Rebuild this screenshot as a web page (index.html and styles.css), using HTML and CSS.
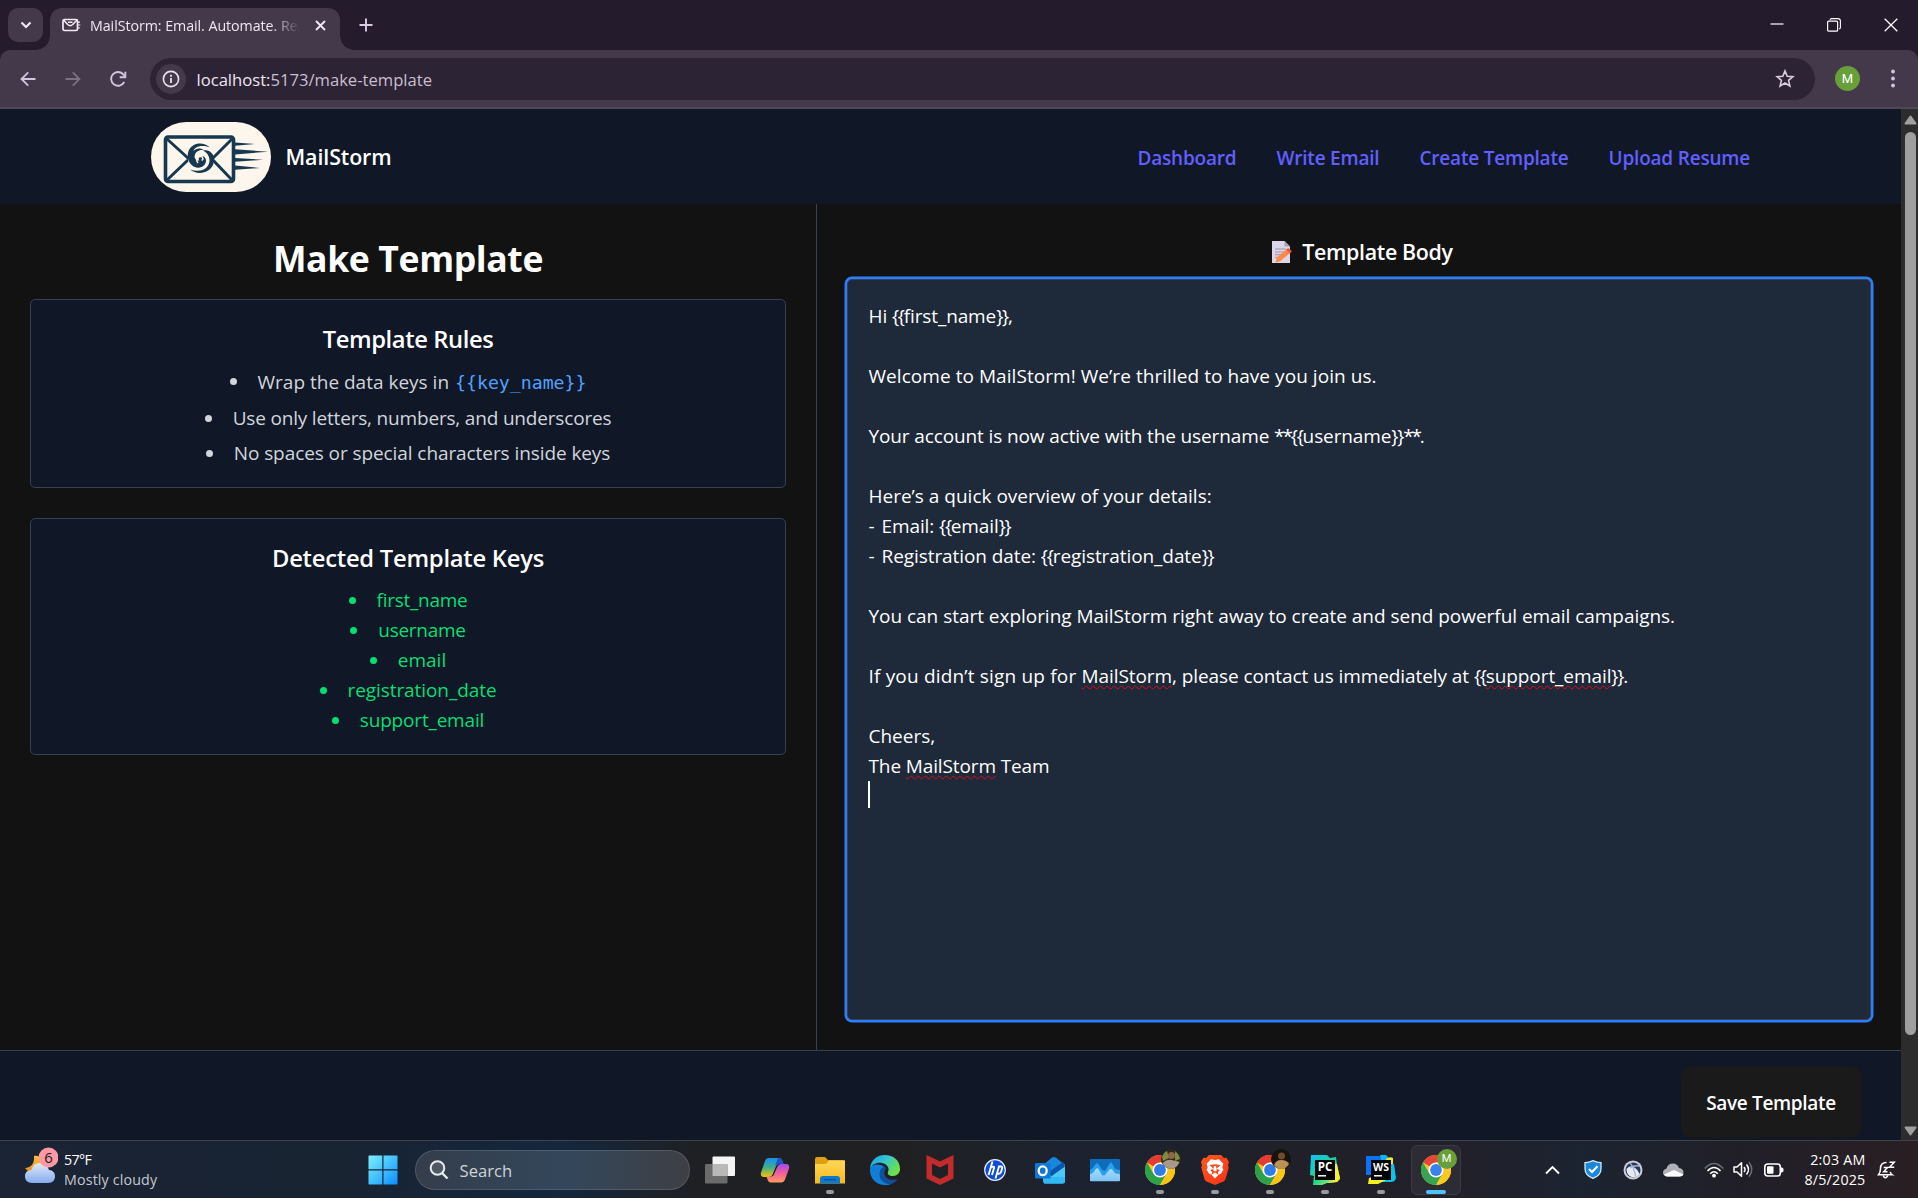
FILE: index.html
```
<!DOCTYPE html>
<html lang="en">
<head>
<meta charset="utf-8">
<title>MailStorm: Email. Automate. Repeat.</title>
<link rel="stylesheet" href="styles.css">
</head>
<body>
<svg class="defs" width="0" height="0" aria-hidden="true">
  <defs>
    <linearGradient id="gWin" x1="0" y1="0" x2="1" y2="1"><stop offset="0" stop-color="#7df0ff"/><stop offset="1" stop-color="#0a8fff"/></linearGradient>
    <linearGradient id="gCloud" x1="0" y1="0" x2="0" y2="1"><stop offset="0" stop-color="#dfeafc"/><stop offset="1" stop-color="#86abec"/></linearGradient>
    <linearGradient id="gMoon" x1="0" y1="0" x2="0" y2="1"><stop offset="0" stop-color="#ffc23c"/><stop offset="1" stop-color="#f08a10"/></linearGradient>
    <linearGradient id="gCopA" x1="0" y1="0" x2="0" y2="1"><stop offset="0" stop-color="#1a8ff0"/><stop offset=".5" stop-color="#3fae8c"/><stop offset="1" stop-color="#f6c400"/></linearGradient>
    <linearGradient id="gCopB" x1="0" y1="0" x2="0" y2="1"><stop offset="0" stop-color="#a24bf0"/><stop offset=".5" stop-color="#f25f9a"/><stop offset="1" stop-color="#ff9a5c"/></linearGradient>
    <linearGradient id="gFold" x1="0" y1="0" x2="0" y2="1"><stop offset="0" stop-color="#ffd75a"/><stop offset="1" stop-color="#f7b91b"/></linearGradient>
    <linearGradient id="gEdge" x1="0" y1="0" x2="1" y2=".5"><stop offset="0" stop-color="#1f9de8"/><stop offset=".5" stop-color="#32c5d0"/><stop offset="1" stop-color="#6ee04a"/></linearGradient>
    <linearGradient id="gWave" x1="0" y1="0" x2="0" y2="1"><stop offset="0" stop-color="#a9dcff"/><stop offset="1" stop-color="#7cc4f5"/></linearGradient>
    <linearGradient id="gPC" x1="0" y1="0" x2="1" y2="1"><stop offset="0" stop-color="#0fc0f5"/><stop offset=".55" stop-color="#21d789"/><stop offset="1" stop-color="#fcf84a"/></linearGradient>
    <linearGradient id="gBrave" x1="0" y1="0" x2="1" y2="1"><stop offset="0" stop-color="#ff5a1f"/><stop offset="1" stop-color="#f9301a"/></linearGradient>
    <symbol id="chrome" viewBox="0 0 30 30">
      <circle cx="15" cy="15" r="15" fill="#f7c61e"/>
      <path d="M15 15 2 7.500A15 15 0 0 1 28 7.500L15 7.500Z" fill="#e53b30"/>
      <path d="M2 7.500A15 15 0 0 0 15 30L21.500 18.750 8.500 18.750Z" fill="#2da04b"/>
      <path d="M28 7.500H15V18.750H21.500L15 30A15 15 0 0 0 28 7.500Z" fill="#fbc518"/>
      <circle cx="15" cy="15" r="7.500" fill="#fff"/><circle cx="15" cy="15" r="5.900" fill="#2f7bea"/>
    </symbol>
  </defs>
</svg>

<div class="window">
  <div class="tabstrip">
    <div class="tab-search"><svg width="12" height="8" viewBox="0 0 12 8"><path d="M1.500 1.500 6 6l4.500-4.500" fill="none" stroke="#efe7f3" stroke-width="2.200"/></svg></div>
    <div class="tab">
      <svg class="favicon" width="19" height="14" viewBox="0 0 19 14"><rect x="1" y="1.500" width="14.500" height="11" rx="1.500" fill="none" stroke="#f0ebf2" stroke-width="1.700"/><path d="m1.500 2 4.200 4.500q2.500 2.200 5 0L15 2M6 4.200h4.500" fill="none" stroke="#f0ebf2" stroke-width="1.600"/><path d="M15.500 4.200h2.500M15.500 7h2.800M15.500 9.800h2.300" stroke="#f0ebf2" stroke-width="1.200"/></svg>
      <span class="tab-title">MailStorm: Email. Automate. Rep</span>
      <svg class="tab-close" width="11" height="11" viewBox="0 0 11 11"><path d="m1 1 9 9M10 1l-9 9" stroke="#f0e8f4" stroke-width="1.800"/></svg>
    </div>
    <svg class="new-tab" width="14" height="14" viewBox="0 0 14 14"><path d="M7 .5v13M.5 7h13" stroke="#d9cbe4" stroke-width="1.900"/></svg>
    <div class="controls">
      <svg width="14" height="14" viewBox="0 0 14 14"><path d="M.5 6h13" stroke="#fff" stroke-width="1.200"/></svg>
      <svg width="14" height="14" viewBox="0 0 14 14"><rect x=".6" y="3.200" width="10" height="10" rx="1" fill="none" stroke="#fff" stroke-width="1.200"/><path d="M3 1.800q.3-1.200 1.500-1.200H11q2.400 0 2.400 2.400v6.500q0 1-1.200 1.500" fill="none" stroke="#fff" stroke-width="1.100"/></svg>
      <svg width="14" height="14" viewBox="0 0 14 14"><path d="m.7.7 12.600 12.600M13.300.7.7 13.300" stroke="#fff" stroke-width="1.300"/></svg>
    </div>
  </div>

  <div class="toolbar">
    <div class="nav-buttons">
      <svg width="16" height="16" viewBox="0 0 16 16"><path d="M15.500 8H2M8.200 1.300 1.500 8l6.700 6.700" fill="none" stroke="#d3c3df" stroke-width="1.800"/></svg>
      <svg width="16" height="16" viewBox="0 0 16 16"><path d="M.5 8H14M7.800 1.300 14.500 8l-6.700 6.700" fill="none" stroke="#7b7084" stroke-width="1.800"/></svg>
      <svg width="17" height="16" viewBox="0 0 17 16"><path d="M14.200 11A6.900 6.900 0 1 1 13.500 3.600L15.300 5.800" fill="none" stroke="#d3c3df" stroke-width="1.900"/><path d="M15.300.7v5.600H9.700" fill="none" stroke="#d3c3df" stroke-width="1.900"/></svg>
    </div>
    <div class="omnibox">
      <div class="site-info"><svg width="18" height="18" viewBox="0 0 18 18"><circle cx="9" cy="9" r="7.600" fill="none" stroke="#e9e1ee" stroke-width="1.600"/><path d="M9 8v5M9 4.800v1.900" stroke="#e9e1ee" stroke-width="1.800"/></svg></div>
      <span class="url"><b>localhost:</b>5173/make-template</span>
      <svg class="star" width="20" height="19" viewBox="0 0 20 19"><path d="m10 1.900 2.200 5.300 5.700.5-4.300 3.700 1.300 5.600L10 14l-4.900 3 1.300-5.600L2.100 7.700l5.700-.5z" fill="none" stroke="#d8cde0" stroke-width="1.600"/></svg>
    </div>
    <div class="profile">M</div>
    <svg class="menu" width="4" height="19" viewBox="0 0 4 19" fill="#d3c3df"><circle cx="2" cy="2.500" r="1.900"/><circle cx="2" cy="9.500" r="1.900"/><circle cx="2" cy="16.500" r="1.900"/></svg>
  </div>

  <div class="viewport">
    <div class="page">
      <header class="site-header">
        <div class="brand">
          <svg width="120" height="70" viewBox="0 0 120 70">
            <rect width="120" height="70" rx="35" fill="#fdf6ec"/>
            <g fill="none" stroke="#17384f" stroke-width="3.600"><rect x="14.500" y="15" width="68" height="44.500" rx="2.500"/><path d="M16 17 38 37M81 17 61 37M16 58l22-21M81 58 61 37" stroke-width="3"/></g>
            <circle cx="49.500" cy="36" r="12.500" fill="#fdf6ec"/>
            <g fill="#17384f">
              <path d="M59 25.500C52 19 41 20.500 37.500 29c-2.500 7 1 15 8 16.500 5.500 1 9.500-2.500 9.500-7 0-3-2.500-5-5-4.500s-3 3-1.500 4.500c-3 .5-5.500-2-4.800-5 .8-4 5-6.500 9.300-5.300C50 25.500 45 26 42.500 29c1-4 7-7 16.500-3.500Z"/>
              <path d="M52 28.500C60 27 65 34 62.500 41.500 59.500 51 47 54 39 47.500c6 2 13 2 17-2.500 4.500-5 3-13-4-16.500Z"/>
            </g>
            <path d="M50.500 38c2 0 2-3.500-1-3.500-3.500 0-5 4-2.500 6.500" fill="none" stroke="#fdf6ec" stroke-width="1.500"/>
            <path d="M84 20.500 104 22 84 23.800ZM84 27.300 117 29.700 84 32.400ZM84 36 112 37.700 84 39.800ZM84 43.500 109 46 84 47.800Z" fill="#17384f"/>
          </svg>
          <span class="brand-name">MailStorm</span>
        </div>
        <nav class="links">
          <a>Dashboard</a><a>Write Email</a><a>Create Template</a><a>Upload Resume</a>
        </nav>
      </header>

      <main class="columns">
        <section class="left">
          <h1>Make Template</h1>
          <div class="card">
            <h2>Template Rules</h2>
            <ul class="rules">
              <li class="with-code"><span>Wrap the data keys in</span><code>{{key_name}}</code></li>
              <li class="tight">Use only letters, numbers, and underscores</li>
              <li class="snug">No spaces or special characters inside keys</li>
            </ul>
          </div>
          <div class="card">
            <h2 class="detected">Detected Template Keys</h2>
            <ul class="keys">
              <li class="tighter">first_name</li>
              <li class="tighter">username</li>
              <li>email</li>
              <li class="snug">registration_date</li>
              <li class="tight">support_email</li>
            </ul>
          </div>
        </section>
        <section class="right">
          <h3>
            <svg width="20" height="22" viewBox="0 0 20 22"><path d="M0 0h12.500L18 5.500V22H0Z" fill="#ded6e6"/><path d="M12.500 0v5.500H18Z" fill="#a99fb5"/><path d="M3 8h11M3 11h11M3 13.700h8M3 16.300h5" stroke="#9b92a8" stroke-width="1"/><path d="m3.500 21.500 1.200-4.800L14 8.700l3.700 3.600-9.500 7.900Z" fill="#ff8a45"/><path d="m14 8.700 1.500-1.300q1-.6 2 .3l1.700 1.700q.9 1 .1 1.800l-1.600 1.200Z" fill="#f4503e"/></svg>
            <span>Template Body</span>
          </h3>
          <div class="editor" role="textbox">
            <p class="line narrow">Hi <i>{{</i>first_name<i>}}</i>,</p>
            <p class="line"></p>
            <p class="line wide">Welcome to MailStorm! We’re thrilled to have you join us.</p>
            <p class="line"></p>
            <p class="line narrow">Your account is now active with the username <em>**</em><i>{{</i>username<i>}}</i><em>**</em>.</p>
            <p class="line"></p>
            <p class="line">Here’s a quick overview of your details:</p>
            <p class="line narrow"><span class="dash">- </span>Email: <i>{{</i>email<i>}}</i></p>
            <p class="line snug"><span class="dash">- </span>Registration date: <i>{{</i>registration_date<i>}}</i></p>
            <p class="line"></p>
            <p class="line campaign">You can start exploring MailStorm right away to create and send powerful email campaigns.</p>
            <p class="line"></p>
            <p class="line snug"><span class="lead">If you didn’t sign up for </span><u>MailStorm</u>, please contact us immediately at <i>{{</i><u>support_email</u><i>}}</i>.</p>
            <p class="line"></p>
            <p class="line">Cheers,</p>
            <p class="line narrow">The <u>MailStorm</u> Team</p>
            <div class="caret"></div>
          </div>
        </section>
      </main>

      <footer class="actions"><button>Save Template</button></footer>
    </div>
    <div class="scrollbar">
      <svg width="13" height="10" viewBox="0 0 13 10"><path d="M6.500 1.500 11.500 8.500H1.500Z" fill="#9f9f9f" stroke="#9f9f9f" stroke-width="2" stroke-linejoin="round"/></svg>
      <div class="thumb"></div>
      <svg width="13" height="10" viewBox="0 0 13 10"><path d="M1.500 1.500h10L6.500 8.500Z" fill="#9f9f9f" stroke="#9f9f9f" stroke-width="2" stroke-linejoin="round"/></svg>
    </div>
  </div>
</div>

<div class="taskbar">
  <div class="weather">
    <svg width="36" height="38" viewBox="0 0 36 38"><path d="M12 9c6-1 10 4 9 10-1 6-11 11-18 2 6 0 10-5 9-12Z" fill="url(#gMoon)"/><path d="M10 36q-7 0-7-6.500T9.500 23Q11 16 18 16t9 7q6 .5 6 6.500T26 36Z" fill="url(#gCloud)"/><circle cx="26.500" cy="10.500" r="10" fill="#ff99a4"/><text x="26.500" y="16" class="badge-text">6</text></svg>
    <div class="weather-text"><span class="temp">57°F</span><span>Mostly cloudy</span></div>
  </div>
  <div class="cell start"><svg width="30" height="30" viewBox="0 0 30 30" fill="url(#gWin)"><path d="M1 .5h13.300v13.800H.5V1zM15.500.5H29l.5.5v13.300h-14zM.5 15.500h13.800v14H1l-.5-.5zM15.500 15.500h14V29l-.5.500H15.500z"/></svg></div>
  <div class="search"><svg width="20" height="20" viewBox="0 0 20 20"><circle cx="8.500" cy="8" r="6.800" fill="#ffffff22" stroke="#e8eaee" stroke-width="2"/><path d="m13 13 5.500 5.500" stroke="#e8eaee" stroke-width="2.400"/></svg><span>Search</span></div>
  <div class="apps">
    <div class="cell"><svg width="30" height="30" viewBox="0 0 30 30"><rect x="7.500" y="1.500" width="22.500" height="19.500" rx="1" fill="#f4f4f4"/><rect y="9" width="22.500" height="19.500" rx="1" fill="#6b6b6b"/><path d="M7.500 9h15v12h-15z" fill="#b9b9b9"/></svg></div>
    <div class="cell"><svg width="30" height="30" viewBox="0 0 30 30"><path d="M9 3h10q2.500 0 3.300 2.500L23.500 9H19q-2.500 0-3.400 3l-2.800 7q-1.300 3-4.300 3H4q-4 0-3-4.500L5 6q1-3 4-3Z" fill="url(#gCopA)"/><path d="M18 3q3 0 4 2.500L23.500 9H18q-2 0-3 2Z" fill="#1d53c9"/><path d="M21 27.500H11q-2.500 0-3.300-2.500L6.500 21.500H11q2.500 0 3.400-3l2.800-6.500q1.300-3 4.300-3H26q4 0 3 4.500L25 24.500q-1 3-4 3Z" fill="url(#gCopB)"/></svg></div>
    <div class="cell running"><svg width="30" height="30" viewBox="0 0 30 30"><path d="M0 4q0-2 2-2h8l3 3h15q2 0 2 2v6H0Z" fill="#e09f10"/><path d="M0 9h11l3-3.500h16V28.500H0Z" fill="url(#gFold)"/><path d="M5 28.500V24q0-3 3-3h14q3 0 3 3v4.500Z" fill="#0f78cf"/><path d="M9 24.700h12" stroke="#0a4e93" stroke-width="1.200"/></svg></div>
    <div class="cell"><svg width="30" height="30" viewBox="0 0 30 30"><path d="M15 0C6 0 .5 6 0 14c2-5 7-7 12-6 5 1 8 5 6 9-1 2 1 4 5 4 4 0 7-3 7-7C30 5 23 0 15 0Z" fill="url(#gEdge)"/><path d="M0 14C-.5 23 6 30 15 30c3 0 5-.6 7-1.600-7 1-12-3-12-9 0-4 2-6 4.500-7.500C9 8 1 9 0 14Z" fill="#0f7fd8"/><path d="M14.500 11.500c-5 2-6 7-4 11.500 2 5 8 7 12 5.400 2-1 4-2.700 5.300-5-3 2-8 2-11-.400-3-2.500-3-6-1.500-8.500.8-1.300.5-2.500-.8-3Z" fill="#114f9e"/></svg></div>
    <div class="cell"><svg width="28" height="30" viewBox="0 0 28 30"><path d="M.5 0 14 6.500 27.500 0v23.500L14 30 .5 23.500ZM6 8.500V20l8 4 8-4V8.500l-8 4Z" fill="#c22d2b" fill-rule="evenodd"/></svg></div>
    <div class="cell"><svg width="22" height="22" viewBox="0 0 22 22"><circle cx="11" cy="11" r="10.300" fill="#0c4cd8" stroke="#e9ecf4" stroke-width="1.200"/><g fill="none" stroke="#fff" stroke-width="1.900"><path d="m4.500 16 4-13.500M7 8.500q3.500-2 3 .5L8 16M11.500 19.500l3.500-12h2q1.700 0 1.200 1.700L17 13q-.5 1.700-2.200 1.700H13"/></g></svg></div>
    <div class="cell"><svg width="30" height="30" viewBox="0 0 30 30"><path d="M7 11 17 2.500q2-1 4 .2L30 10v10L8 20Z" fill="#1687dc"/><path d="M14 17 29 8.500l1 3.500v14q0 2.500-2.500 2.500H9Z" fill="#49c9fa"/><path d="m14 17 14-10 2 4.500-14 10Z" fill="#0a55ad"/><path d="M8 22h22v4q0 2.500-2.500 2.500h-17Q8 28.500 8 26Z" fill="#32b8f2"/><rect y="8" width="15.500" height="15.500" rx="1" fill="#0f78d4"/><ellipse cx="7.700" cy="15.800" rx="4" ry="4.400" fill="none" stroke="#fff" stroke-width="2.300"/></svg></div>
    <div class="cell"><svg width="30" height="30" viewBox="0 0 30 30"><rect y="4" width="30" height="22" rx="1" fill="#0e6cbd"/><path d="M0 15q3-1 5-5l2-2 2 2 3 5 3 1 5-8q1-1 2 0l3 6 5 1v11H0Z" fill="#2ba0e8"/><path d="M0 19q3 0 5-4l2-2q1 0 2 2l3 5q1 1 3 0l5-6 2 .200 3 4 5 1v6q0 1-1 1H1q-1 0-1-1Z" fill="url(#gWave)"/></svg></div>
    <div class="cell running"><svg width="30" height="30"><use href="#chrome"/></svg><svg class="avatar" width="20" height="20" viewBox="0 0 20 20"><circle cx="10" cy="10" r="10" fill="#2b2a1c"/><path d="M1 8q2-5 5-6l2 7-6 3ZM14 2q4 3 5 8l-5 2Z" fill="#7f8c3e"/><circle cx="10.500" cy="6.500" r="3.500" fill="#91654a"/><path d="M1.500 14q4-4 9-3t8 2q-3 7-9 7-6-1-8-6Z" fill="#a79a86"/></svg></div>
    <div class="cell running"><svg width="28" height="30" viewBox="0 0 28 30"><path d="M8 0h12l3 3 2.500-.300L28 7l-1 3 .7 2.500L24.500 24q-.5 1.500-2 2.500L14 30l-8.500-3.500q-1.500-1-2-2.500L.3 12.500 1 10 0 7l2.500-4.300L5 3Z" fill="url(#gBrave)"/><path d="m14 5 4-.8 4.300 4.500-1 4.300 1.200 1.500-2.500 4-2.300 1.200-1-2.500 2-2-3.200-1.500L19.500 10 14 9.200 8.500 10l4 3.700-3.200 1.500 2 2-1 2.500L8 18.500l-2.500-4L6.700 13l-1-4.300L10 4.200ZM14 17.500l3.500 2.200-3.500 3.800-3.500-3.800ZM13 11h2l.8 4.500-1.800 1-1.800-1Z" fill="#fff"/></svg></div>
    <div class="cell running"><svg width="30" height="30"><use href="#chrome"/></svg><svg class="avatar" width="20" height="20" viewBox="0 0 20 20"><circle cx="10" cy="10" r="10" fill="#17130f"/><circle cx="10.500" cy="7" r="3.500" fill="#74492f"/><path d="M3 16q2-5 7-5 6 0 8 4-3 5-8 5-4 0-7-4Z" fill="#bd9154"/></svg></div>
    <div class="cell running"><svg width="30" height="30" viewBox="0 0 30 30"><path d="M1 0h16l3 3 6-1 1 8 3 13-3 4-10 1-5 2H3L4 21l-4-1Z" fill="url(#gPC)"/><path d="M25 9h2l3 15-3 3-10 1 8-3Z" fill="#f4f135"/><rect x="5" y="5" width="20" height="20"/><text x="15" y="15.500" class="jb">PC</text><path d="M8 20.800h8" stroke="#fff" stroke-width="1.500"/></svg></div>
    <div class="cell running"><svg width="30" height="30" viewBox="0 0 30 30"><path d="M0 1h14l5 4-8 15H0Z" fill="#0b72f5"/><path d="M14 0h6l4 4-8 4Z" fill="#10b6f2"/><path d="M20 4q4-3 7-1v6h-7Z" fill="#f4e92d"/><path d="M25 9h3l2 14q-1 4-5 4H12l8-3Z" fill="#0bc3e8"/><path d="M3 23 9 21l11 4-8 4H2Z" fill="#f6ee24"/><rect x="5" y="5" width="20" height="20"/><text x="15" y="15.500" class="jb ws">WS</text><path d="M8 20.800h8" stroke="#fff" stroke-width="1.500"/></svg></div>
    <div class="cell running active"><svg width="30" height="30"><use href="#chrome"/></svg><span class="avatar letter">M</span></div>
  </div>
  <div class="tray">
    <svg class="t-chev" width="15" height="10" viewBox="0 0 15 10"><path d="m1 8.500 6.500-6.500 6.500 6.500" fill="none" stroke="#fff" stroke-width="1.900"/></svg>
    <svg class="t-shield" width="18" height="19" viewBox="0 0 18 19"><path d="M9 .7q4 2 8 2v6q0 6.500-8 9.600Q1 15.200 1 8.700v-6q4 0 8-2Z" fill="#1b87dc" stroke="#cfe8fb" stroke-width="1.300"/><path d="m5 9 3 3 5.500-5.800" fill="none" stroke="#fff" stroke-width="2"/></svg>
    <svg class="t-circle" width="20" height="20" viewBox="0 0 20 20"><circle cx="10" cy="10" r="9.500" fill="#c9ced8"/><circle cx="10" cy="10" r="7.500" fill="#26395a"/><path d="M3.500 9q3-4 7-2t6 7q-3 4-8 3-5-2-5-8Z" fill="#e7eaf0"/><path d="M7 3q4 4 5.500 13M17 6q-6-1-10 2" fill="none" stroke="#a9b6cc" stroke-width="1.300"/></svg>
    <svg class="t-cloud" width="21" height="14" viewBox="0 0 21 14"><path d="M4 13.500q-4-.5-4-4 0-3 3.500-4Q5 .5 10 .5q4.500 0 6 4.500 4.500.5 4.500 4.500t-4 4Z" fill="#aeb0b5"/><path d="m1 11.500 10-4.500 9.500 4.500q-1 2-4 2H4q-2 0-3-2Z" fill="#fff"/></svg>
    <svg class="t-wifi" width="20" height="16" viewBox="0 0 20 16"><g fill="none" stroke-width="1.600"><path d="M.7 6.500q9.300-10 18.600 0" stroke="#676d78"/><path d="M3.500 9q6.500-7 13 0M6.200 11.800q3.800-4.200 7.600 0" stroke="#fff"/></g><circle cx="10" cy="13.700" r="1.900" fill="#fff"/></svg>
    <svg class="t-vol" width="20" height="17" viewBox="0 0 20 17"><g fill="none" stroke-width="1.500"><path d="M1 6h3l4.500-4.300v13.600L4 11H1Z" stroke="#fff" stroke-linejoin="round"/><path d="M11 6q2 2.500 0 5M13.500 3.500q4 5 0 10" stroke="#fff"/><path d="M16 1.200q5.500 7.300 0 14.600" stroke="#676d78"/></g></svg>
    <svg class="t-bat" width="20" height="14" viewBox="0 0 20 14"><rect x=".8" y="1" width="15.500" height="12" rx="3" fill="none" stroke="#fff" stroke-width="1.600"/><rect x="3" y="3.200" width="6.500" height="7.600" rx="1" fill="#fff"/><path d="M17 4.500h1l1.500 1.200v2.600L18 9.500h-1Z" fill="#fff"/></svg>
    <div class="clock"><span>2:03 AM</span><span>8/5/2025</span></div>
    <svg class="t-bell" width="19" height="18" viewBox="0 0 19 18"><path d="M9.500 1.500Q3.500 1.500 3.500 7.500q0 4-2 6.300h13.700q-1.600-1-1.900-3" fill="none" stroke="#fff" stroke-width="1.500"/><path d="M6 14.500q2.200 4.500 4.800 0M6.700 6.500h3.800l-3.800 4.200h3.800M12.500 1.200h4.700l-4.700 5h4.700" fill="none" stroke="#fff" stroke-width="1.500"/></svg>
  </div>
</div>
</body>
</html>
```
FILE: styles.css
```
* { box-sizing: border-box; }
body {
  margin: 0;
  width: 1918px;
  height: 1198px;
  overflow: hidden;
  display: flex;
  flex-direction: column;
  background: #121212;
  color: #fff;
  font-family: "Open Sans", "Noto Sans", sans-serif;
  font-size: 19px;
}
svg { display: block; flex: none; }
.defs { position: absolute; }
h1, h2, h3, p, ul { margin: 0; padding: 0; }
ul { list-style: none; }
.window { height: 1140px; display: flex; flex-direction: column; background: #241b2d; }

/* Tab strip */
.tabstrip { height: 50px; flex: none; display: flex; align-items: center; padding-left: 8px; }
.tab-search { width: 35px; height: 34px; border-radius: 10px; background: #43394b; display: grid; place-items: center; }
.tab {
  position: relative;
  width: 290px;
  height: 42px;
  margin: 8px 0 0 7px;
  padding: 0 14px 8px 12px;
  border-radius: 12px 12px 0 0;
  background: #43394b;
  display: flex;
  align-items: center;
}
.tab::before, .tab::after { content: ""; position: absolute; bottom: 0; width: 14px; height: 14px; }
.tab::before { left: -14px; background: radial-gradient(circle at 0 0, transparent 13.5px, #43394b 14px); }
.tab::after { right: -14px; background: radial-gradient(circle at 100% 0, transparent 13.5px, #43394b 14px); }
.tab-title {
  width: 216px;
  margin-left: 9px;
  overflow: hidden;
  white-space: nowrap;
  font-size: 14.25px;
  letter-spacing: -.06px;
  color: #eee6f2;
  -webkit-mask-image: linear-gradient(90deg, #000 180px, transparent 210px);
  mask-image: linear-gradient(90deg, #000 180px, transparent 210px);
}
.tab-close { margin-left: auto; }
.new-tab { margin-left: 19px; }
.controls { margin-left: auto; display: flex; gap: 43px; padding-right: 20px; }

/* Toolbar */
.toolbar { height: 59px; flex: none; display: flex; align-items: center; background: #43394b; border-bottom: 2px solid #50475a; border-radius: 10px 10px 0 0; }
.nav-buttons { display: flex; gap: 29px; width: 150px; padding-left: 20px; }
.omnibox { width: 1665px; height: 42px; border-radius: 21px; background: #2c2334; display: flex; align-items: center; padding: 0 20px 0 6px; }
.site-info { width: 30px; height: 30px; border-radius: 50%; background: #43394b; display: grid; place-items: center; }
.url { margin: 0 auto 0 10.5px; padding-top: 1px; font-size: 16.63px; color: #c9bfd0; }
.url b { font-weight: 400; color: #eee6f2; }
.profile { width: 25px; height: 25px; margin-left: 20px; border-radius: 50%; background: #689f38; display: grid; place-items: center; font: 13px Roboto, sans-serif; }
.menu { margin-left: 31px; }

/* Page */
.viewport { flex: 1; display: flex; min-height: 0; }
.page { width: 1901px; display: flex; flex-direction: column; background: #121212; }
.site-header { height: 95px; flex: none; padding: 0 151px; background: #101726; display: flex; align-items: center; justify-content: space-between; }
.brand { display: flex; align-items: center; gap: 14.5px; }
.brand-name { font-size: 21.4px; font-weight: 600; letter-spacing: -.1px; }
.links { display: flex; gap: 40px; font-weight: 600; color: #615fff; padding-top: 3px; letter-spacing: -.2px; }
.columns { height: 846px; flex: none; display: flex; }
.left { width: 817px; padding: 30px; border-right: 1px solid #364153; display: flex; flex-direction: column; }
h1 { height: 45px; margin-bottom: 20px; padding-top: 2px; line-height: 45px; text-align: center; font-size: 35.6px; font-weight: 700; letter-spacing: -.4px; }
.card { border: 1px solid #364153; border-radius: 5px; background: #101726; padding: 20px; margin-bottom: 30px; }
h2 { height: 35px; margin-bottom: 10px; padding-top: 2px; line-height: 34px; text-align: center; font-size: 23.75px; font-weight: 600; letter-spacing: -.4px; }
h2.detected { letter-spacing: -.24px; }
.rules, .keys { display: flex; flex-direction: column; }
.rules { gap: 5px; color: #d1d5dc; }
.keys { color: #05df72; }
li { height: 30px; padding-top: 3px; display: flex; align-items: center; justify-content: center; white-space: pre; line-height: 27px; }
li::before { content: ""; width: 7px; height: 7px; margin: 0 21px 1px 0; border-radius: 50%; background: currentColor; }
.with-code { height: 32px; padding-top: 2px; }
code { margin-left: 6px; font: 18.2px "DejaVu Sans Mono", monospace; color: #51a2ff; }
.tight { letter-spacing: -.18px; }
.snug { letter-spacing: -.08px; }
.tighter { letter-spacing: -.28px; }
.right { flex: 1; padding: 30px; display: flex; flex-direction: column; }
h3 { height: 35px; margin-bottom: 10px; padding-left: 7px; display: flex; align-items: center; justify-content: center; gap: 10px; font-size: 21.4px; font-weight: 600; letter-spacing: -.34px; }
.editor { height: 741px; padding: 21px 20px; border: 1px solid #364153; border-radius: 5px; background: #1e2939; box-shadow: 0 0 0 2.5px #2b7fff; }
.line { height: 30px; line-height: 30px; white-space: pre; padding-left: .5px; }
.wide { letter-spacing: .055px; }
.narrow { letter-spacing: -.12px; }
.campaign { letter-spacing: -.03px; }
.dash { letter-spacing: 1px; }
.lead { letter-spacing: .18px; }
.line i { font-style: normal; letter-spacing: -1.2px; }
.line em { font-style: normal; letter-spacing: -2.1px; }
.line u { text-decoration: underline wavy #d40f1a 1px; text-underline-offset: 2px; text-decoration-skip-ink: none; }
.caret { width: 2px; height: 27px; background: #fff; }
.actions { flex: 1; border-top: 1px solid #364153; background: #101726; display: flex; justify-content: flex-end; align-items: flex-start; padding: 15px 40px 0; }
button { width: 180px; height: 72px; border: 0; border-radius: 10px; background: #1a1a1a; color: #fff; font: 600 19px "Open Sans", sans-serif; letter-spacing: -.33px; padding-top: 2px; }
.scrollbar { width: 17px; background: #2c2c2c; display: flex; flex-direction: column; align-items: center; padding: 6px 0 4px 1px; }
.thumb { width: 11px; height: 903px; margin: 7px 0 auto; border-radius: 6px; background: #9f9f9f; }

/* Taskbar */
.taskbar {
  height: 58px;
  display: flex;
  align-items: center;
  border-top: 1px solid #3f4249;
  background: linear-gradient(90deg, #1a2434 0, #192433 350px, #13273d 560px, #1e2024 690px, #202022 900px, #1c2230 1080px, #1f2029 1260px, #22202a 1450px, #1c2431 1580px, #201f28 1740px, #2a1f23 1918px);
}
.weather { width: 355.5px; padding-left: 22px; display: flex; gap: 6px; align-items: center; }
.weather svg { margin-top: -8px; }
.weather-text { display: flex; flex-direction: column; font-size: 14.25px; line-height: 20px; letter-spacing: .15px; color: #c5c9cf; }
.weather-text .temp { color: #fff; letter-spacing: -.6px; }
.badge-text { font-size: 15px; fill: #1b1b1f; text-anchor: middle; }
.jb { font: 700 11.500px "Open Sans", sans-serif; fill: #fff; text-anchor: middle; }
.ws { font-size: 10.500px; }
.cell { position: relative; width: 55.08px; height: 50px; display: grid; place-items: center; flex: none; }
.start { margin-right: 4px; }
.search { width: 275px; height: 40px; margin-right: 2.5px; padding-left: 13px; border: 1px solid #ffffff22; border-radius: 20px; background: linear-gradient(90deg, #343d4b, #33475b 55%, #3e3f44); display: flex; align-items: center; gap: 11px; font-size: 16.6px; color: #d0d3d8; }
.search span { padding-top: 2px; }
.apps { display: flex; }
.running::after { content: ""; position: absolute; left: 23.5px; bottom: 1px; width: 8px; height: 4px; border-radius: 2px; background: #9a9a9e; }
.active::before { content: ""; position: absolute; inset: 0 2.500px; border: 1px solid #3b3a44; border-radius: 6px; background: #ffffff0d; }
.active::after { left: 17.500px; width: 20px; background: #4cc2ff; }
.avatar { position: absolute; left: 28.500px; top: 4px; }
.letter { width: 20px; height: 20px; border-radius: 50%; background: #689f38; display: grid; place-items: center; font: 11px Roboto, sans-serif; }
.tray { margin-left: auto; padding-right: 22.5px; display: flex; align-items: center; }
.t-chev { margin-right: 24px; }
.t-shield { margin-right: 21px; }
.t-circle { margin-right: 20px; }
.t-cloud { margin-right: 20px; }
.t-wifi { margin-right: 9px; }
.t-vol { margin-right: 11px; }
.t-bat { margin-right: 20px; }
.clock { display: flex; flex-direction: column; text-align: right; font-size: 14.25px; line-height: 20px; letter-spacing: .22px; padding-top: 1px; }
.t-bell { margin-left: 11px; }
```
